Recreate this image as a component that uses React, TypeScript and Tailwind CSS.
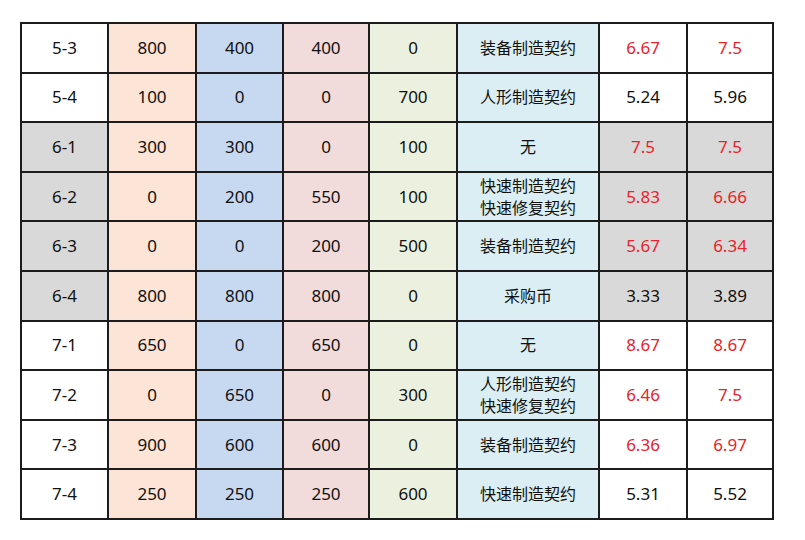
const rows: {
  id: string;
  a: string;
  b: string;
  c: string;
  d: string;
  item: string[];
  x: string;
  y: string;
  red: boolean;
  grey: boolean;
}[] = [
  { id: "5-3", a: "800", b: "400", c: "400", d: "0", item: ["装备制造契约"], x: "6.67", y: "7.5", red: true, grey: false },
  { id: "5-4", a: "100", b: "0", c: "0", d: "700", item: ["人形制造契约"], x: "5.24", y: "5.96", red: false, grey: false },
  { id: "6-1", a: "300", b: "300", c: "0", d: "100", item: ["无"], x: "7.5", y: "7.5", red: true, grey: true },
  { id: "6-2", a: "0", b: "200", c: "550", d: "100", item: ["快速制造契约", "快速修复契约"], x: "5.83", y: "6.66", red: true, grey: true },
  { id: "6-3", a: "0", b: "0", c: "200", d: "500", item: ["装备制造契约"], x: "5.67", y: "6.34", red: true, grey: true },
  { id: "6-4", a: "800", b: "800", c: "800", d: "0", item: ["采购币"], x: "3.33", y: "3.89", red: false, grey: true },
  { id: "7-1", a: "650", b: "0", c: "650", d: "0", item: ["无"], x: "8.67", y: "8.67", red: true, grey: false },
  { id: "7-2", a: "0", b: "650", c: "0", d: "300", item: ["人形制造契约", "快速修复契约"], x: "6.46", y: "7.5", red: true, grey: false },
  { id: "7-3", a: "900", b: "600", c: "600", d: "0", item: ["装备制造契约"], x: "6.36", y: "6.97", red: true, grey: false },
  { id: "7-4", a: "250", b: "250", c: "250", d: "600", item: ["快速制造契约"], x: "5.31", y: "5.52", red: false, grey: false },
];

const cell = "border-2 border-[#1c1c1c] text-center align-middle p-0 text-[17px]";

export default function App() {
  return (
    <div
      className="w-[805px] h-[540px] bg-white pl-[20px] pt-[22px]"
      style={{ fontFamily: '"Noto Sans", "Noto Sans CJK SC", sans-serif' }}
    >
      <table className="border-collapse table-fixed w-[752px] leading-[22px] text-[#111]">
        <colgroup>
          <col className="w-[87px]" />
          <col className="w-[88px]" />
          <col className="w-[87px]" />
          <col className="w-[86px]" />
          <col className="w-[88px]" />
          <col className="w-[142px]" />
          <col className="w-[88px]" />
          <col className="w-[86px]" />
        </colgroup>
        <tbody>
          {rows.map((r) => {
            const side = r.grey ? "bg-[#d9d9d9]" : "bg-white";
            const num = r.red ? "text-[#e8242b]" : "";
            return (
              <tr key={r.id} className="h-[49.6px]">
                <td className={`${cell} ${side}`}>{r.id}</td>
                <td className={`${cell} bg-[#fce4d6]`}>{r.a}</td>
                <td className={`${cell} bg-[#c6d9f0]`}>{r.b}</td>
                <td className={`${cell} bg-[#f2dcdb]`}>{r.c}</td>
                <td className={`${cell} bg-[#ebf1de]`}>{r.d}</td>
                <td className={`${cell} bg-[#daeef3] !text-[16px]`}>
                  {r.item.map((t) => (
                    <div key={t}>{t}</div>
                  ))}
                </td>
                <td className={`${cell} ${side} ${num}`}>{r.x}</td>
                <td className={`${cell} ${side} ${num}`}>{r.y}</td>
              </tr>
            );
          })}
        </tbody>
      </table>
    </div>
  );
}
